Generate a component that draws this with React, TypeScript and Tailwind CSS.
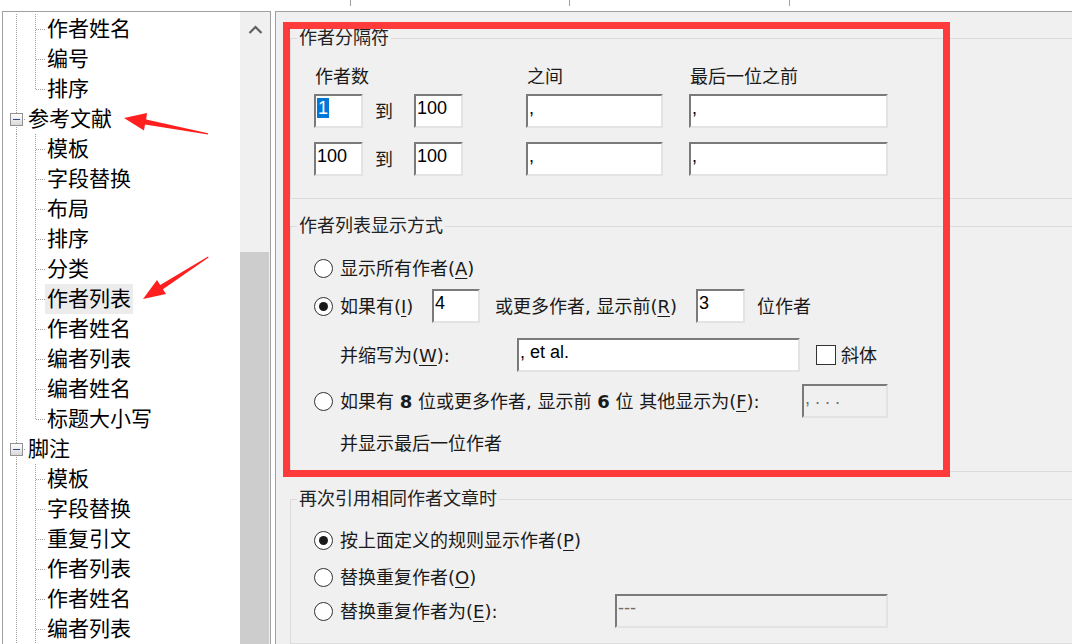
import React from "react"

type Node = { t: string; k: "c" | "l" | "p"; sel?: boolean }

const tree: Node[] = [
  { t: "作者姓名", k: "c" },
  { t: "编号", k: "c" },
  { t: "排序", k: "l" },
  { t: "参考文献", k: "p" },
  { t: "模板", k: "c" },
  { t: "字段替换", k: "c" },
  { t: "布局", k: "c" },
  { t: "排序", k: "c" },
  { t: "分类", k: "c" },
  { t: "作者列表", k: "c", sel: true },
  { t: "作者姓名", k: "c" },
  { t: "编者列表", k: "c" },
  { t: "编者姓名", k: "c" },
  { t: "标题大小写", k: "l" },
  { t: "脚注", k: "p" },
  { t: "模板", k: "c" },
  { t: "字段替换", k: "c" },
  { t: "重复引文", k: "c" },
  { t: "作者列表", k: "c" },
  { t: "作者姓名", k: "c" },
  { t: "编者列表", k: "c" },
  { t: "编者姓名", k: "c" },
]

function Guides({ kind }: { kind: Node["k"] }) {
  const dot = { stroke: "#a0a0a0", strokeDasharray: "1 1" }
  if (kind === "p") {
    return (
      <svg width="23" height="30" className="shrink-0">
        <line x1="13.5" y1="0" x2="13.5" y2="9" {...dot} />
        <line x1="13.5" y1="21" x2="13.5" y2="30" {...dot} />
        <line x1="19" y1="15.5" x2="23" y2="15.5" {...dot} />
        <defs>
          <linearGradient id="bx" x1="0" y1="0" x2="0" y2="1">
            <stop offset="0" stopColor="#ffffff" />
            <stop offset="1" stopColor="#d8d8d8" />
          </linearGradient>
        </defs>
        <rect x="7.5" y="9.5" width="12" height="12" fill="url(#bx)" stroke="#919191" />
        <line x1="10" y1="15.5" x2="17" y2="15.5" stroke="#2a4a85" />
      </svg>
    )
  }
  return (
    <svg width="42" height="30" className="shrink-0">
      <line x1="13.5" y1="0" x2="13.5" y2="30" {...dot} />
      <line x1="32.5" y1="0" x2="32.5" y2={kind === "l" ? 16 : 30} {...dot} />
      <line x1="33" y1="15.5" x2="42" y2="15.5" {...dot} />
    </svg>
  )
}

function Radio({ checked }: { checked?: boolean }) {
  return (
    <span className="w-[19px] h-[19px] rounded-full border border-[#333] bg-white flex items-center justify-center shrink-0">
      {checked && <span className="w-[9px] h-[9px] rounded-full bg-[#1a1a1a]" />}
    </span>
  )
}

function Field({
  className,
  value,
  sel,
  disabled,
}: {
  className: string
  value?: string
  sel?: boolean
  disabled?: boolean
}) {
  return (
    <div
      className={
        "h-[34px] shrink-0 border-2 border-t-[#7a7a7a] border-l-[#7a7a7a] border-b-[#e3e3e3] border-r-[#e3e3e3] pl-px leading-[24px] text-[18px] whitespace-pre font-['Liberation_Sans',sans-serif] " +
        (disabled ? "bg-[#f0f0f0] text-[#6d6d6d] " : "bg-white text-black ") +
        className
      }
    >
      {sel ? <span className="bg-[#0078d7] text-white px-px">{value}</span> : value}
    </div>
  )
}

const U = ({ c }: { c: string }) => <span className="underline underline-offset-[3px] decoration-1">{c}</span>

export default function App() {
  return (
    <div className="relative w-[1072px] h-[644px] overflow-hidden bg-white text-[#1a1a1a] font-['DejaVu_Sans','Noto_Sans_CJK_SC',sans-serif]">
      {/* header strip */}
      <div className="flex h-[11px]">
        <div className="w-[351px] h-[6px] border-r border-[#a0a0a0]" />
        <div className="w-[219px] h-[6px] border-r border-[#a0a0a0]" />
        <div className="w-[220px] h-[6px] border-r border-[#a0a0a0]" />
      </div>

      <div className="flex h-[633px]">
        {/* tree panel */}
        <div className="ml-[2px] w-[269px] flex border-l border-r border-t border-[#a0a0a0]">
          <div className="w-[237px] pt-[2px] bg-white text-[21px] text-black">
            {tree.map((n, i) => (
              <div key={i} className="flex items-center h-[30px] leading-[30px]">
                <Guides kind={n.k} />
                <span className={"px-[2px] whitespace-nowrap " + (n.sel ? "bg-[#ececec]" : "")}>{n.t}</span>
              </div>
            ))}
          </div>
          <div className="flex-1 flex flex-col bg-[#f0f0f0]">
            <div className="h-[34px] flex items-start">
              <svg width="29" height="34">
                <polyline points="9.5,21 15.5,15 21.5,21" fill="none" stroke="#606060" strokeWidth="2.2" />
              </svg>
            </div>
            <div className="h-[206px]" />
            <div className="flex-1 mr-px bg-[#cdcdcd]" />
          </div>
        </div>

        <div className="w-[4px]" />

        {/* settings panel */}
        <div className="flex-1 bg-[#f0f0f0] border-l border-t border-[#a0a0a0] overflow-hidden text-[18px]">
          <fieldset className="ml-[14px] mt-[14px] w-[800px] border border-[#dcdcdc] pb-[22px]">
            <legend className="ml-[6px] px-[2px] leading-[24px] text-[#222]">作者分隔符</legend>
            <div className="ml-[23px] grid grid-cols-[49px_51px_49px_63px_137px_26px_199px] w-fit">
              <div className="col-span-3 mt-[15px] h-[24px] leading-[24px] pl-px">作者数</div>
              <div className="col-start-5 mt-[15px] h-[24px] leading-[24px] pl-px">之间</div>
              <div className="col-start-7 mt-[15px] h-[24px] leading-[24px] pl-px">最后一位之前</div>

              <div className="mt-[5px]"><Field className="w-[49px]" value="1" sel /></div>
              <div className="mt-[5px] h-[34px] flex items-center pl-[12px] pt-[1px]">到</div>
              <div className="mt-[5px]"><Field className="w-[49px]" value="100" /></div>
              <div />
              <div className="mt-[5px]"><Field className="w-[137px]" value="," /></div>
              <div />
              <div className="mt-[5px]"><Field className="w-[199px]" value="," /></div>

              <div className="mt-[14px]"><Field className="w-[49px]" value="100" /></div>
              <div className="mt-[14px] h-[34px] flex items-center pl-[12px] pt-[1px]">到</div>
              <div className="mt-[14px]"><Field className="w-[49px]" value="100" /></div>
              <div />
              <div className="mt-[14px]"><Field className="w-[137px]" value="," /></div>
              <div />
              <div className="mt-[14px]"><Field className="w-[199px]" value="," /></div>
            </div>
          </fieldset>

          <fieldset className="ml-[14px] mt-[15px] w-[800px] border border-[#dcdcdc] pb-[11px]">
            <legend className="ml-[6px] px-[2px] leading-[24px] text-[#222]">作者列表显示方式</legend>
            <div className="ml-[23px] mt-[13px] h-[34px] flex items-center">
              <Radio />
              <span className="ml-[7px]">显示所有作者(<U c="A" />)</span>
            </div>
            <div className="ml-[23px] mt-[4px] h-[34px] flex items-center">
              <Radio checked />
              <span className="ml-[7px] w-[92px] shrink-0">如果有(<U c="I" />)</span>
              <Field className="w-[48px]" value="4" />
              <span className="w-[216px] pl-[15px] shrink-0 whitespace-nowrap">或更多作者, 显示前(<U c="R" />)</span>
              <Field className="w-[49px]" value="3" />
              <span className="pl-[12px]">位作者</span>
            </div>
            <div className="ml-[49px] mt-[15px] h-[34px] flex items-center">
              <span className="w-[177px] shrink-0">并缩写为(<U c="W" />):</span>
              <Field className="w-[283px]" value=", et al." />
              <span className="ml-[16px] w-[20px] h-[20px] border border-[#333] bg-white shrink-0" />
              <span className="ml-[5px]">斜体</span>
            </div>
            <div className="ml-[23px] mt-[12px] h-[34px] flex items-center">
              <Radio />
              <span className="ml-[7px] w-[462px] shrink-0 whitespace-nowrap">
                如果有 <b>8</b> 位或更多作者, 显示前 <b>6</b> 位 其他显示为(<U c="F" />):
              </span>
              <Field className="w-[86px]" value=", . . ." disabled />
            </div>
            <div className="ml-[49px] mt-[8px] h-[34px] flex items-center">并显示最后一位作者</div>
          </fieldset>

          <fieldset className="ml-[14px] mt-[15px] w-[800px] border border-[#dcdcdc] pb-[15px]">
            <legend className="ml-[6px] px-[2px] leading-[24px] text-[#222]">再次引用相同作者文章时</legend>
            <div className="ml-[23px] mt-[12px] h-[34px] flex items-center">
              <Radio checked />
              <span className="ml-[7px]">按上面定义的规则显示作者(<U c="P" />)</span>
            </div>
            <div className="ml-[23px] mt-[3px] h-[34px] flex items-center">
              <Radio />
              <span className="ml-[7px]">替换重复作者(<U c="O" />)</span>
            </div>
            <div className="ml-[23px] h-[34px] flex items-center">
              <Radio />
              <span className="ml-[7px] w-[275px] shrink-0">替换重复作者为(<U c="E" />):</span>
              <Field className="w-[273px]" value="---" disabled />
            </div>
          </fieldset>
        </div>
      </div>

      {/* annotation overlay */}
      <div className="absolute left-[283px] top-[22px] w-[667px] h-[455px] border-[7px] border-[#ff3a3a] pointer-events-none" />
      <svg className="absolute inset-0 pointer-events-none" width="1072" height="644">
        <polygon points="124,118 147,113 146.2,119.4 208,133.2 208,134.6 145,124.6 144,130.5" fill="#ff1f1f" />
        <polygon points="143,299 157,280 160.2,285 208,256.4 208.6,257.4 162.9,289.2 166,294" fill="#ff1f1f" />
      </svg>
    </div>
  )
}
